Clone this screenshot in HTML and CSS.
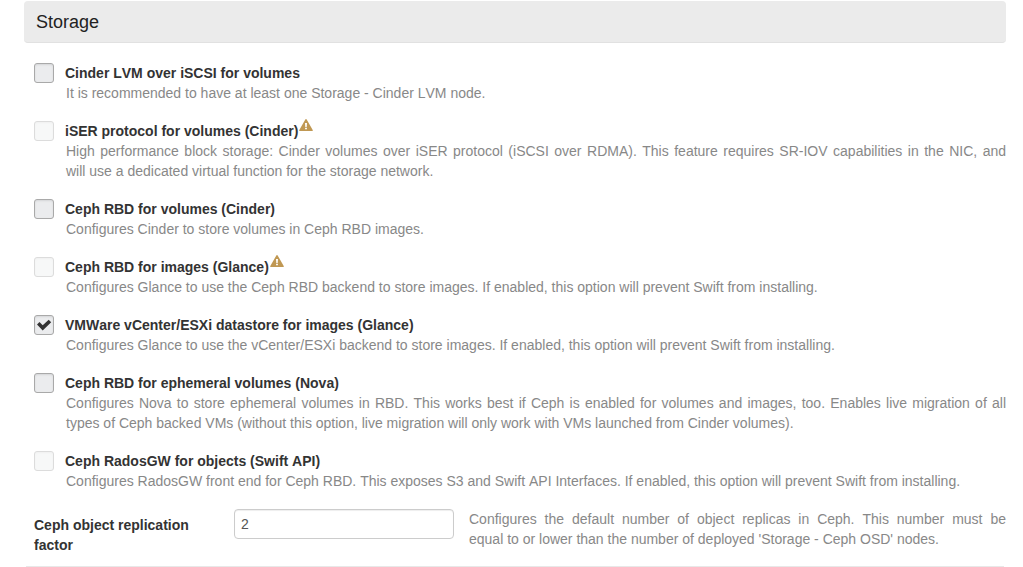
FILE: index.html
```html
<!DOCTYPE html>
<html lang="en">
<head>
<meta charset="utf-8">
<title>Storage</title>
<link rel="stylesheet" href="styles.css">
</head>
<body>
<svg class="symbols" aria-hidden="true">
  <symbol id="warning" viewBox="0 0 14 12">
    <path fill="#c09853" fill-rule="evenodd" d="M7 0c.3 0 .5.2.7.5l6 10.5c.3.5 0 1-.6 1H.9c-.6 0-.9-.5-.6-1l6-10.500C6.500.2 6.700 0 7 0zM6 4l.3 4h1.400L8 4zM6.100 8.800v1.500h1.800V8.800z"/>
  </symbol>
</svg>
<form class="settings">
  <h3 class="title">Storage</h3>
  <div class="options">
    <div class="option">
      <input class="check" type="checkbox" id="lvm" aria-describedby="lvm-d">
      <div class="text">
        <label class="name" for="lvm">Cinder LVM over iSCSI for volumes</label>
        <p class="description" id="lvm-d">It is recommended to have at least one Storage - Cinder LVM node.</p>
      </div>
    </div>
    <div class="option">
      <input class="check" type="checkbox" id="iser" aria-describedby="iser-d" disabled>
      <div class="text">
        <label class="name" for="iser">iSER protocol for volumes (Cinder)<svg class="warning" role="img" aria-label="Warning"><use href="#warning"/></svg></label>
        <p class="description" id="iser-d">High performance block storage: Cinder volumes over iSER protocol (iSCSI over RDMA). This feature requires SR-IOV capabilities in the NIC, and will&nbsp;use a dedicated virtual function for the storage network.</p>
      </div>
    </div>
    <div class="option">
      <input class="check" type="checkbox" id="volumes" aria-describedby="volumes-d">
      <div class="text">
        <label class="name" for="volumes">Ceph RBD for volumes (Cinder)</label>
        <p class="description" id="volumes-d">Configures Cinder to store volumes in Ceph RBD images.</p>
      </div>
    </div>
    <div class="option">
      <input class="check" type="checkbox" id="images" aria-describedby="images-d" disabled>
      <div class="text">
        <label class="name" for="images">Ceph RBD for images (Glance)<svg class="warning" role="img" aria-label="Warning"><use href="#warning"/></svg></label>
        <p class="description" id="images-d">Configures Glance to use the Ceph RBD backend to store images. If enabled, this option will prevent Swift from installing.</p>
      </div>
    </div>
    <div class="option">
      <span class="tickbox">
        <input class="check" type="checkbox" id="vcenter" aria-describedby="vcenter-d" checked>
        <svg class="tick" viewBox="0 0 20 20" aria-hidden="true"><path fill="#333" d="M3 9.500 5.500 7 8.700 10.200 14.700 4.700 17.200 7.200 8.700 15.400z"/></svg>
      </span>
      <div class="text">
        <label class="name" for="vcenter">VMWare vCenter/ESXi datastore for images (Glance)</label>
        <p class="description" id="vcenter-d">Configures Glance to use the vCenter/ESXi backend to store images. If enabled, this option will prevent Swift from installing.</p>
      </div>
    </div>
    <div class="option">
      <input class="check" type="checkbox" id="ephemeral" aria-describedby="ephemeral-d">
      <div class="text">
        <label class="name" for="ephemeral">Ceph RBD for ephemeral volumes (Nova)</label>
        <p class="description" id="ephemeral-d">Configures Nova to store ephemeral volumes in RBD. This works best if Ceph is enabled for volumes and images, too. Enables live migration of all types of Ceph backed VMs (without this option, live migration will only work with VMs launched from Cinder volumes).</p>
      </div>
    </div>
    <div class="option">
      <input class="check" type="checkbox" id="rados" aria-describedby="rados-d" disabled>
      <div class="text">
        <label class="name" for="rados">Ceph RadosGW for objects (Swift API)</label>
        <p class="description" id="rados-d">Configures RadosGW front end for Ceph RBD. This exposes S3 and Swift API Interfaces. If enabled, this option will prevent Swift from installing.</p>
      </div>
    </div>
    <div class="field">
      <label class="field-name" for="factor">Ceph object replication factor</label>
      <input class="value" type="text" id="factor" value="2" aria-describedby="factor-d">
      <p class="field-description" id="factor-d">Configures the default number of object replicas in Ceph. This number must be equal&nbsp;to or lower than the number of deployed 'Storage - Ceph OSD' nodes.</p>
    </div>
  </div>
  <hr class="divider">
</form>
</body>
</html>
```
FILE: styles.css
```css
* { box-sizing: border-box; }
body {
  margin: 0;
  background: #fff;
  color: #333;
  font: 14px/20px "Liberation Sans", Arial, sans-serif;
  font-kerning: none;
}
.symbols { display: none; }
.settings { padding: 1px 17px 0 24px; }
.title {
  margin: 0;
  padding: 11px 12px 10px;
  border-bottom: 1px solid #e1e1e1;
  border-radius: 4px;
  background: #ebebeb;
  color: #222;
  font-size: 18px;
  font-weight: normal;
}
.options {
  display: flex;
  flex-direction: column;
  gap: 18px;
  padding: 20px 0 11px 10px;
}
.option { display: flex; gap: 11px; }
.check {
  appearance: none;
  flex: none;
  display: block;
  width: 20px;
  height: 20px;
  margin: 0;
  border: 1px solid #a9a9a9;
  border-radius: 3px;
  background: #ebecee;
  box-shadow: inset 0 1px 2px #d4d5d7;
}
.check:disabled {
  border-color: #dcdcdc;
  background: #f7f8f8;
  box-shadow: inset 0 1px 2px #f0f0f0;
}
.tickbox { position: relative; flex: none; width: 20px; height: 20px; }
.tick {
  position: absolute;
  inset: 0;
  pointer-events: none;
}
.text { flex: 1; min-width: 0; }
.name {
  display: flex;
  align-items: flex-start;
  font-weight: bold;
}
.warning {
  flex: none;
  width: 14px;
  height: 12px;
  margin: -2px 0 0 1px;
}
.description {
  margin: 0;
  padding-left: 1px;
  color: #888;
  text-align: justify;
}
.field { display: flex; align-items: flex-start; }
.field-name {
  flex: none;
  width: 180px;
  margin-right: 20px;
  padding-top: 6px;
  font-weight: bold;
}
.value {
  flex: none;
  width: 220px;
  height: 30px;
  margin-right: 15px;
  padding: 4px 6px;
  border: 1px solid #ccc;
  border-radius: 4px;
  box-shadow: inset 0 1px 1px #eee;
  background: #fff;
  color: #555;
  font: inherit;
}
.field-description { flex: 1; margin: 0; color: #888; text-align: justify; }
.divider {
  margin: 0 2px;
  border: 0;
  border-top: 1px solid #e8e8e8;
}
```
